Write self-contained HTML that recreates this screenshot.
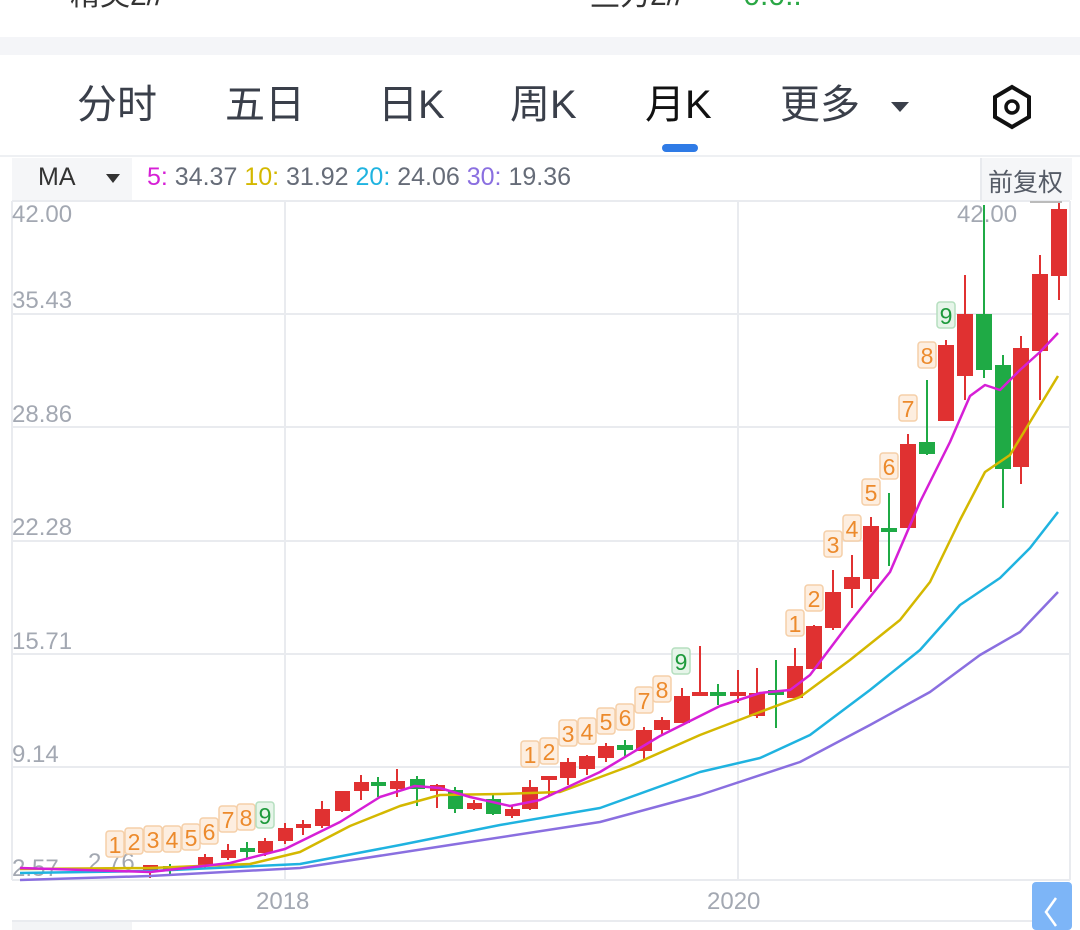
<!DOCTYPE html>
<html><head><meta charset="utf-8"><style>
body{margin:0;width:1080px;height:930px;overflow:hidden;background:#fff;font-family:"Liberation Sans","Noto Sans CJK SC",sans-serif;position:relative}
.a{position:absolute}
.tab{position:absolute;top:80px;font-size:40px;color:#3a3f4a;line-height:50px}
</style></head><body>
<div class="a" style="top:-30px;left:70px;font-size:30px;color:#333">精英2//</div>
<div class="a" style="top:-30px;left:590px;font-size:30px;color:#333">些力2//<span style="color:#2aa745;margin-left:60px">0.0..</span></div>
<div class="a" style="top:-30px;left:1040px;font-size:30px;color:#e33">..</div>
<div class="a" style="top:37px;left:0;width:1080px;height:18px;background:#f4f5f8"></div>
<div class="tab" style="left:77px">分时</div>
<div class="tab" style="left:225px">五日</div>
<div class="tab" style="left:378px">日K</div>
<div class="tab" style="left:510px">周K</div>
<div class="tab" style="left:645px;color:#111">月K</div>
<div class="tab" style="left:780px">更多</div>
<div class="a" style="left:891px;top:102px;width:0;height:0;border-left:9px solid transparent;border-right:9px solid transparent;border-top:10px solid #3a3f4a"></div>
<svg class="a" style="left:990px;top:84px" width="44" height="46" viewBox="0 0 44 46"><polygon points="22,3 39,13 39,33 22,43 5,33 5,13" fill="none" stroke="#111" stroke-width="4"/><circle cx="22" cy="23" r="6" fill="none" stroke="#111" stroke-width="3.5"/></svg>
<div class="a" style="left:662px;top:144px;width:36px;height:8px;border-radius:4px;background:#2f7be6"></div>
<div class="a" style="left:0;top:155px;width:1080px;height:2px;background:#eef0f3"></div>
<div class="a" style="left:12px;top:158px;width:120px;height:42px;background:#f5f6f8"></div>
<div class="a" style="left:38px;top:163px;font-size:25px;color:#333">MA</div>
<div class="a" style="left:106px;top:174px;width:0;height:0;border-left:7px solid transparent;border-right:7px solid transparent;border-top:9px solid #333"></div>
<div class="a" style="left:147px;top:163px;font-size:25px;color:#666c78;white-space:nowrap"><span style="color:#d61fd6">5:</span> 34.37 <span style="color:#d4b800">10:</span> 31.92 <span style="color:#1fb3e0">20:</span> 24.06 <span style="color:#8a6fe0">30:</span> 19.36</div>
<div class="a" style="left:980px;top:158px;width:90px;height:42px;background:#f5f6f8;border-left:2px solid #e8eaee"></div>
<div class="a" style="left:988px;top:163px;font-size:25px;color:#555b66">前复权</div>
<svg class="a" style="left:0;top:0" width="1080" height="930">
<g stroke="#e9ebef" stroke-width="2">
<line x1="12" y1="201" x2="1070" y2="201"/><line x1="12" y1="314" x2="1070" y2="314"/><line x1="12" y1="427" x2="1070" y2="427"/><line x1="12" y1="541" x2="1070" y2="541"/><line x1="12" y1="654" x2="1070" y2="654"/><line x1="12" y1="767" x2="1070" y2="767"/><line x1="12" y1="880" x2="1070" y2="880"/><line x1="12" y1="921" x2="1070" y2="921"/>
<line x1="285" y1="201" x2="285" y2="880"/><line x1="738" y1="201" x2="738" y2="880"/><line x1="1070" y1="201" x2="1070" y2="880"/><line x1="12" y1="201" x2="12" y2="880"/>
</g>
<g font-size="24" fill="#a3a8b2" font-family="Liberation Sans,sans-serif">
<text x="12" y="222">42.00</text><text x="12" y="308">35.43</text><text x="12" y="422">28.86</text><text x="12" y="535">22.28</text><text x="12" y="649">15.71</text><text x="12" y="762">9.14</text><text x="12" y="876">2.57</text><text x="88" y="870">2.76</text><text x="957" y="222">42.00</text>
<text x="256" y="909">2018</text><text x="707" y="909">2020</text>
</g>
<line x1="1030" y1="202" x2="1062" y2="202" stroke="#bbb" stroke-width="2"/>
<g stroke-width="2">
<g fill="#e03131" stroke="#e03131">
<line x1="150" y1="866" x2="150" y2="878"/><rect x="144" y="866" width="13" height="4"/>
<line x1="205" y1="854" x2="205" y2="868"/><rect x="199" y="858" width="13" height="7"/>
<line x1="228" y1="844" x2="228" y2="860"/><rect x="222" y="851" width="13" height="6"/>
<line x1="265" y1="838" x2="265" y2="856"/><rect x="259" y="842" width="13" height="10"/>
<line x1="285" y1="823" x2="285" y2="844"/><rect x="279" y="829" width="13" height="11"/>
<line x1="303" y1="820" x2="303" y2="835"/><rect x="297" y="825" width="13" height="2"/>
<line x1="322" y1="801" x2="322" y2="828"/><rect x="316" y="810" width="13" height="15"/>
<line x1="342" y1="792" x2="342" y2="812"/><rect x="336" y="792" width="13" height="18"/>
<line x1="361" y1="775" x2="361" y2="800"/><rect x="355" y="783" width="13" height="7"/>
<line x1="397" y1="769" x2="397" y2="797"/><rect x="391" y="782" width="13" height="6"/>
<line x1="437" y1="784" x2="437" y2="808"/><rect x="431" y="786" width="13" height="4"/>
<line x1="474" y1="800" x2="474" y2="810"/><rect x="468" y="804" width="13" height="4"/>
<line x1="512" y1="806" x2="512" y2="818"/><rect x="506" y="810" width="13" height="5"/>
<line x1="530" y1="780" x2="530" y2="810"/><rect x="523" y="788" width="14" height="20"/>
<line x1="549" y1="778" x2="549" y2="795"/><rect x="542" y="777" width="14" height="2"/>
<line x1="568" y1="758" x2="568" y2="785"/><rect x="561" y="763" width="14" height="14"/>
<line x1="587" y1="755" x2="587" y2="775"/><rect x="580" y="757" width="14" height="11"/>
<line x1="606" y1="743" x2="606" y2="762"/><rect x="599" y="747" width="14" height="10"/>
<line x1="644" y1="727" x2="644" y2="760"/><rect x="637" y="731" width="14" height="19"/>
<line x1="662" y1="717" x2="662" y2="735"/><rect x="655" y="721" width="14" height="8"/>
<line x1="682" y1="688" x2="682" y2="722"/><rect x="675" y="697" width="14" height="25"/>
<line x1="700" y1="646" x2="700" y2="696"/><rect x="693" y="693" width="14" height="2"/>
<line x1="738" y1="670" x2="738" y2="703"/><rect x="731" y="693" width="14" height="2"/>
<line x1="757" y1="668" x2="757" y2="718"/><rect x="750" y="694" width="14" height="21"/>
<line x1="795" y1="648" x2="795" y2="700"/><rect x="788" y="667" width="14" height="30"/>
<line x1="814" y1="625" x2="814" y2="670"/><rect x="807" y="627" width="14" height="41"/>
<line x1="833" y1="570" x2="833" y2="630"/><rect x="826" y="593" width="14" height="34"/>
<line x1="852" y1="555" x2="852" y2="608"/><rect x="845" y="578" width="14" height="10"/>
<line x1="871" y1="517" x2="871" y2="592"/><rect x="864" y="527" width="14" height="51"/>
<line x1="908" y1="434" x2="908" y2="527"/><rect x="901" y="445" width="14" height="82"/>
<line x1="946" y1="340" x2="946" y2="420"/><rect x="939" y="346" width="14" height="74"/>
<line x1="965" y1="275" x2="965" y2="400"/><rect x="958" y="315" width="14" height="60"/>
<line x1="1021" y1="336" x2="1021" y2="484"/><rect x="1014" y="349" width="14" height="117"/>
<line x1="1040" y1="255" x2="1040" y2="400"/><rect x="1033" y="275" width="14" height="75"/>
<line x1="1059" y1="203" x2="1059" y2="300"/><rect x="1052" y="210" width="14" height="65"/>
</g>
<g fill="#1faa45" stroke="#1faa45">
<line x1="170" y1="864" x2="170" y2="874"/><rect x="164" y="867" width="13" height="3"/>
<line x1="247" y1="842" x2="247" y2="858"/><rect x="241" y="849" width="13" height="2"/>
<line x1="378" y1="777" x2="378" y2="797"/><rect x="372" y="783" width="13" height="2"/>
<line x1="417" y1="776" x2="417" y2="806"/><rect x="411" y="780" width="13" height="8"/>
<line x1="455" y1="787" x2="455" y2="813"/><rect x="449" y="791" width="13" height="17"/>
<line x1="493" y1="795" x2="493" y2="815"/><rect x="487" y="800" width="13" height="13"/>
<line x1="625" y1="740" x2="625" y2="756"/><rect x="618" y="746" width="14" height="3"/>
<line x1="718" y1="684" x2="718" y2="705"/><rect x="711" y="693" width="14" height="2"/>
<line x1="776" y1="660" x2="776" y2="728"/><rect x="769" y="691" width="14" height="3"/>
<line x1="889" y1="493" x2="889" y2="566"/><rect x="882" y="529" width="14" height="2"/>
<line x1="927" y1="380" x2="927" y2="455"/><rect x="920" y="443" width="14" height="10"/>
<line x1="984" y1="205" x2="984" y2="378"/><rect x="977" y="315" width="14" height="54"/>
<line x1="1003" y1="355" x2="1003" y2="508"/><rect x="996" y="366" width="14" height="102"/>
</g>
</g>
<g fill="none" stroke-width="2.5" stroke-linejoin="round">
<polyline stroke="#8a6fe0" points="20,880 150,876 300,868 450,845 600,822 700,795 800,762 870,725 930,692 980,655 1020,632 1058,592"/>
<polyline stroke="#1fb3e0" points="20,873 150,871 300,864 400,845 500,825 600,808 700,772 760,758 810,735 870,690 920,650 960,605 1000,578 1030,548 1058,512"/>
<polyline stroke="#d4b800" points="20,869 150,868 250,864 300,852 350,826 400,806 440,795 500,794 560,792 630,766 700,735 760,712 800,697 850,660 900,620 930,582 960,520 985,472 1010,455 1030,422 1058,376"/>
<polyline stroke="#d61fd6" points="20,868 150,872 230,863 285,849 340,822 380,797 415,786 440,788 470,797 510,806 540,800 600,772 660,736 720,706 760,693 790,690 810,675 850,622 890,572 920,502 950,442 970,396 985,385 1000,390 1020,370 1040,352 1058,333"/>
</g>
<g font-size="23" font-family="Liberation Sans,sans-serif" text-anchor="middle">
<g fill="#fdeee0" stroke="#f5cfa8" stroke-width="1.5">
<rect x="106" y="831" width="18" height="26" rx="3"/><rect x="125" y="828" width="18" height="26" rx="3"/><rect x="144" y="826" width="18" height="26" rx="3"/><rect x="163" y="826" width="18" height="26" rx="3"/><rect x="182" y="824" width="18" height="26" rx="3"/><rect x="200" y="818" width="18" height="26" rx="3"/><rect x="219" y="806" width="18" height="26" rx="3"/><rect x="237" y="804" width="18" height="26" rx="3"/>
<rect x="521" y="741" width="18" height="26" rx="3"/><rect x="540" y="738" width="18" height="26" rx="3"/><rect x="559" y="720" width="18" height="26" rx="3"/><rect x="578" y="718" width="18" height="26" rx="3"/><rect x="597" y="708" width="18" height="26" rx="3"/><rect x="616" y="704" width="18" height="26" rx="3"/><rect x="635" y="687" width="18" height="26" rx="3"/><rect x="653" y="676" width="18" height="26" rx="3"/>
<rect x="786" y="610" width="18" height="26" rx="3"/><rect x="805" y="585" width="18" height="26" rx="3"/><rect x="824" y="531" width="18" height="26" rx="3"/><rect x="843" y="515" width="18" height="26" rx="3"/><rect x="862" y="479" width="18" height="26" rx="3"/><rect x="880" y="453" width="18" height="26" rx="3"/><rect x="899" y="395" width="18" height="26" rx="3"/><rect x="918" y="342" width="18" height="26" rx="3"/>
</g>
<g fill="#e6f5e9" stroke="#b5dfbf" stroke-width="1.5">
<rect x="256" y="802" width="18" height="26" rx="3"/><rect x="672" y="648" width="18" height="26" rx="3"/><rect x="937" y="302" width="18" height="26" rx="3"/>
</g>
<g fill="#ec8a2c">
<text x="115" y="853">1</text><text x="134" y="850">2</text><text x="153" y="848">3</text><text x="172" y="848">4</text><text x="191" y="846">5</text><text x="209" y="840">6</text><text x="228" y="828">7</text><text x="246" y="826">8</text>
<text x="530" y="763">1</text><text x="549" y="760">2</text><text x="568" y="742">3</text><text x="587" y="740">4</text><text x="606" y="730">5</text><text x="625" y="726">6</text><text x="644" y="709">7</text><text x="662" y="698">8</text>
<text x="795" y="632">1</text><text x="814" y="607">2</text><text x="833" y="553">3</text><text x="852" y="537">4</text><text x="871" y="501">5</text><text x="889" y="475">6</text><text x="908" y="417">7</text><text x="927" y="364">8</text>
</g>
<g fill="#1e9a3c"><text x="265" y="824">9</text><text x="681" y="670">9</text><text x="946" y="324">9</text></g>
</g>
<rect x="12" y="922" width="120" height="8" fill="#f3f4f6"/>
<rect x="1032" y="882" width="40" height="48" rx="4" fill="#7db5f7"/>
<polyline points="1056,898 1046,912 1056,926" fill="none" stroke="#fff" stroke-width="2.5"/>
</svg>
</body></html>
